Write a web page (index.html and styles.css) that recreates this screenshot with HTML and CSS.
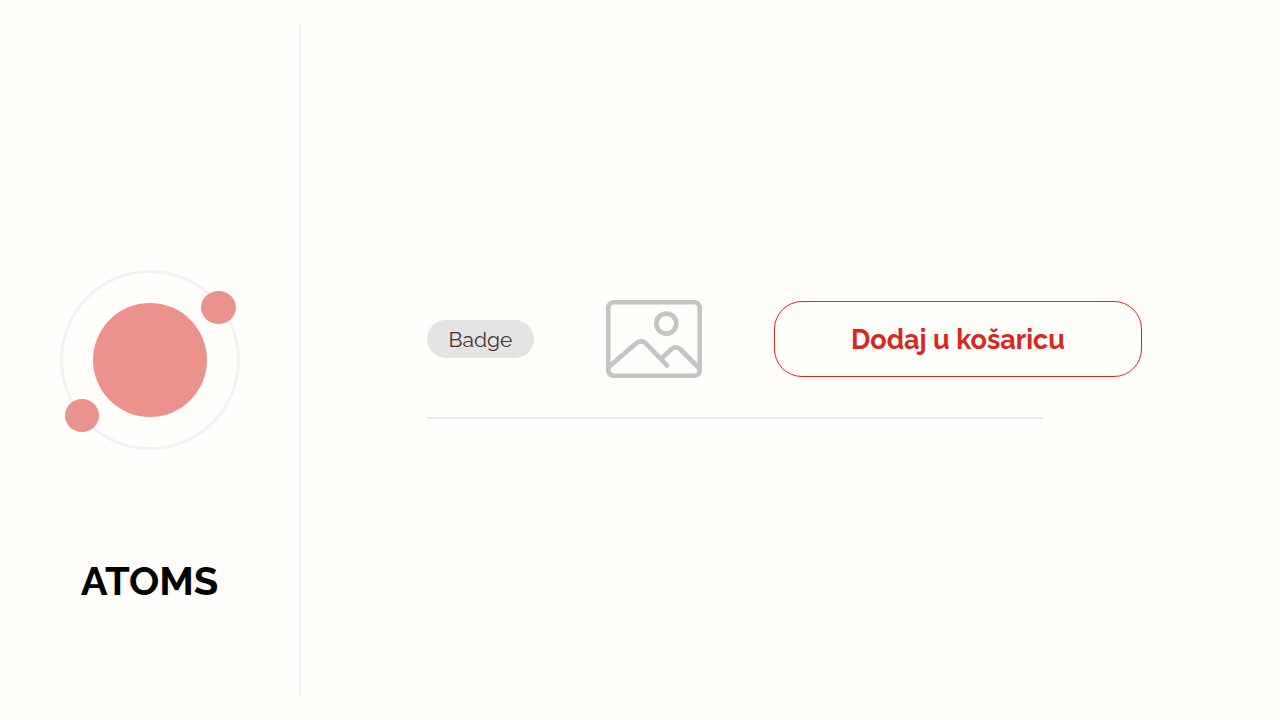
FILE: index.html
```html
<!DOCTYPE html>
<html lang="hr">
<head>
<meta charset="utf-8">
<meta name="viewport" content="width=device-width, initial-scale=1">
<title>Atoms</title>
<link rel="stylesheet" href="styles.css">
</head>
<body>
<div class="page">
  <aside class="intro">
    <svg class="atom" viewBox="0 0 180 180" aria-hidden="true">
      <circle class="orbit" cx="90" cy="90" r="88.5"/>
      <circle class="particle" cx="90" cy="90" r="57"/>
      <ellipse class="particle" cx="158.5" cy="37.5" rx="17.5" ry="16.5"/>
      <ellipse class="particle" cx="22" cy="145.5" rx="17" ry="16.5"/>
    </svg>
    <h1 class="title">ATOMS</h1>
  </aside>
  <main class="examples">
    <div class="row">
      <span class="badge">Badge</span>
      <svg class="image-icon" viewBox="0 0 96 78" aria-hidden="true">
        <rect x="2.2" y="2.2" width="91.600" height="73.600" rx="6"/>
        <circle cx="60.3" cy="23.6" r="10"/>
        <path d="M2 67.500 L30 43.500 Q35.300 39 40 43.500 L61 65.500"/>
        <path d="M55 59 L65.500 49 Q70 45.500 74.500 49.500 L94 69"/>
      </svg>
      <button class="button" type="button">Dodaj u košaricu</button>
    </div>
    <hr class="divider">
  </main>
</div>
</body>
</html>
```

FILE: styles.css
```css
* {
  box-sizing: border-box;
}

body {
  margin: 0;
  background: #fffefb;
  font-family: Raleway, Lato, "Open Sans", sans-serif;
}

.page {
  display: flex;
  min-height: 100vh;
  padding: 24px 0;
}

.intro {
  display: grid;
  grid-template-rows: 1fr auto 1fr;
  justify-items: center;
  flex: 0 0 301px;
  border-right: 2px solid #f0f0f0;
}

.atom {
  grid-row: 2;
  width: 180px;
  height: 180px;
}

.orbit {
  fill: none;
  stroke: #f2f2f2;
  stroke-width: 3;
}

.particle {
  fill: #ec928d;
}

.title {
  grid-row: 3;
  margin: 107px 0 0;
  color: #000;
  font-size: 40px;
  line-height: 48px;
  font-weight: 700;
}

.examples {
  display: flex;
  flex: 1;
  flex-direction: column;
  justify-content: center;
  gap: 39px;
  padding: 0 128px 0 126px;
}

.row {
  display: flex;
  align-items: center;
  gap: 72px;
}

.badge {
  min-width: 107px;
  padding: 5px 20px 3px;
  border-radius: 19px;
  background: #e4e4e4;
  color: #4a2f2c;
  font-size: 21px;
  line-height: 30px;
  text-align: center;
}

.image-icon {
  flex: none;
  width: 96px;
  height: 78px;
  fill: none;
  stroke: #c4c4c4;
  stroke-width: 4.7;
  stroke-linecap: round;
  stroke-linejoin: round;
}

.button {
  min-width: 368px;
  height: 76px;
  padding: 2px 72px 0;
  border: 1px solid #d9261e;
  border-radius: 28px;
  background: transparent;
  color: #d9261e;
  font: inherit;
  font-size: 27px;
  line-height: 32px;
  font-weight: 700;
  white-space: nowrap;
}

.divider {
  width: 85%;
  height: 2px;
  margin: 0 0 2px;
  border: 0;
  background: #e8e8e8;
}
```
